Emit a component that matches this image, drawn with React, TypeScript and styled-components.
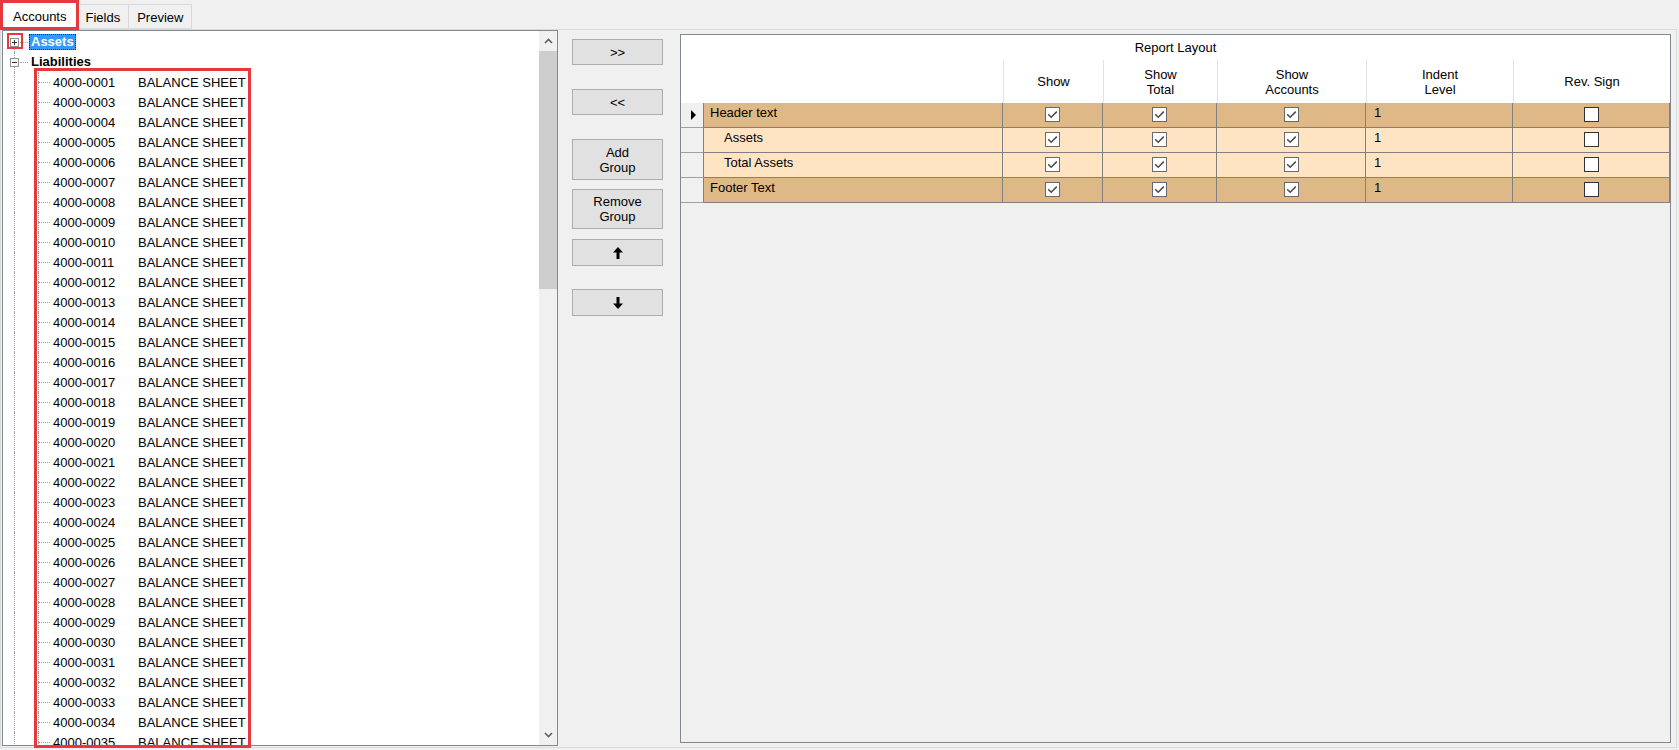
import React from 'react';
import styled, { createGlobalStyle } from 'styled-components';

const GlobalStyle = createGlobalStyle`
  html, body {
    margin: 0;
    padding: 0;
    background: #f0f0f0;
  }
  body {
    font-family: 'Liberation Sans', Arial, sans-serif;
    font-size: 13px;
    color: #000;
  }
`;

const COLS = '23px 299px 100px 114px 149px 147px 157px';
const DOT = '#a0a0a0';

const Window = styled.div`
  position: relative;
  width: 1679px;
  height: 750px;
  overflow: hidden;
  display: flex;
  flex-direction: column;
  background: #f0f0f0;
`;

/* ---------- tabs ---------- */

const TabStrip = styled.div`
  height: 29px;
  display: flex;
  align-items: flex-end;
  padding-left: 2px;
  position: relative;
  z-index: 1;
`;

const Tab = styled.div<{ $active?: boolean }>`
  box-sizing: border-box;
  flex-shrink: 0;
  height: ${p => (p.$active ? 28 : 25)}px;
  margin-bottom: ${p => (p.$active ? -1 : 0)}px;
  padding: 0 ${p => (p.$active ? 10 : 8)}px;
  border: 1px solid #d9d9d9;
  border-bottom: ${p => (p.$active ? 'none' : '1px solid #d9d9d9')};
  margin-left: ${p => (p.$active ? 0 : -1)}px;
  background: ${p => (p.$active ? '#ffffff' : '#f0f0f0')};
  display: flex;
  align-items: center;
  padding-top: ${p => (p.$active ? 0 : 1)}px;
`;

const TabPage = styled.div`
  box-sizing: border-box;
  height: 719px;
  margin-right: 2px;
  border: 1px solid #dadada;
  padding: 0 0 1px 1px;
  display: flex;
  align-items: stretch;
`;

/* ---------- tree ---------- */

const TreePanel = styled.div`
  box-sizing: border-box;
  width: 556px;
  border: 1px solid #828790;
  background: #fff;
  display: flex;
`;

const TreeList = styled.div`
  flex: 1;
  overflow: hidden;
  padding-top: 1px;
`;

const RootRow = styled.div<{ $first?: boolean }>`
  position: relative;
  height: 20px;
  display: flex;
  align-items: center;
  padding-left: 7px;

  &::before {
    content: '';
    position: absolute;
    left: 11px;
    top: ${p => (p.$first ? '50%' : '0')};
    bottom: 0;
    border-left: 1px dotted ${DOT};
  }
`;

const ExpandBox = styled.span`
  position: relative;
  z-index: 1;
  width: 9px;
  height: 9px;
  display: flex;
`;

const RootLink = styled.span`
  width: 8px;
  margin: 0 1px;
  border-top: 1px dotted ${DOT};
`;

const NodeLabel = styled.span<{ $selected?: boolean }>`
  font-weight: bold;
  height: 16px;
  line-height: 16px;
  padding: 0 2px;
  box-sizing: border-box;
  background: ${p => (p.$selected ? '#3399ff' : 'transparent')};
  color: ${p => (p.$selected ? '#fff' : '#000')};
  outline: ${p => (p.$selected ? '1px dotted #0d2a4d' : 'none')};
  outline-offset: -1px;
`;

const ItemRow = styled.div`
  position: relative;
  height: 20px;
  display: flex;
  align-items: center;
  padding-left: 35px;
  white-space: nowrap;

  &::before,
  &::after {
    content: '';
    position: absolute;
    top: 0;
    bottom: 0;
    border-left: 1px dotted ${DOT};
  }
  &::before {
    left: 11px;
  }
  &::after {
    left: 35px;
  }
`;

const ItemLink = styled.span`
  width: 12px;
  margin-right: 3px;
  border-top: 1px dotted ${DOT};
`;

const ItemCode = styled.span`
  width: 85px;
`;

const ScrollBar = styled.div`
  width: 18px;
  background: #f0f0f0;
  display: flex;
  flex-direction: column;
`;

const ScrollArrow = styled.div`
  height: 20px;
  display: flex;
  align-items: center;
  justify-content: center;
`;

const ScrollThumb = styled.div`
  height: 238px;
  background: #cdcdcd;
`;

const ScrollTrack = styled.div`
  flex: 1;
`;

/* ---------- buttons ---------- */

const ButtonColumn = styled.div`
  width: 122px;
  box-sizing: border-box;
  padding-left: 14px;
  display: flex;
  flex-direction: column;
`;

const ActionButton = styled.div<{ $h: number; $gap: number }>`
  box-sizing: border-box;
  width: 91px;
  height: ${p => p.$h}px;
  margin-top: ${p => p.$gap}px;
  background: #e1e1e1;
  border: 1px solid #adadad;
  display: flex;
  align-items: center;
  justify-content: center;
  text-align: center;
  line-height: 15px;
`;

/* ---------- grid ---------- */

const GridPanel = styled.div`
  box-sizing: border-box;
  width: 991px;
  margin: 4px 0 3px 0;
  border: 1px solid #828790;
  background: #f0f0f0;
  display: flex;
  flex-direction: column;
`;

const GridTitle = styled.div`
  height: 25px;
  line-height: 25px;
  text-align: center;
  background: #fff;
`;

const HeaderRow = styled.div`
  display: grid;
  grid-template-columns: ${COLS};
  height: 43px;
  background: #fff;
`;

const HeaderCell = styled.div<{ $sep?: boolean }>`
  border-left: ${p => (p.$sep ? '1px solid #e3e3e3' : 'none')};
  display: flex;
  align-items: center;
  justify-content: center;
  text-align: center;
  line-height: 15px;
`;

const DataRow = styled.div<{ $group?: boolean }>`
  display: grid;
  grid-template-columns: ${COLS};
  height: 25px;
  background: ${p => (p.$group ? '#deb887' : '#ffe4c4')};
`;

const RowHeader = styled.div`
  box-sizing: border-box;
  background: #f0f0f0;
  border-right: 1px solid #808080;
  border-bottom: 1px solid #a0a0a0;
  display: flex;
  align-items: center;
  justify-content: center;
`;

const CurrentMarker = styled.span`
  width: 0;
  height: 0;
  margin-left: 2px;
  border-left: 5px solid #000;
  border-top: 5px solid transparent;
  border-bottom: 5px solid transparent;
`;

const Cell = styled.div<{ $indent?: number; $center?: boolean }>`
  box-sizing: border-box;
  border-right: 1px solid #808080;
  border-bottom: 1px solid #808080;
  display: flex;
  align-items: ${p => (p.$center ? 'center' : 'flex-start')};
  justify-content: ${p => (p.$center ? 'center' : 'flex-start')};
  padding: ${p => (p.$center ? '0' : `2px 0 0 ${p.$indent ?? 6}px`)};
  line-height: 16px;
  white-space: nowrap;
`;

const CheckFrame = styled.span<{ $checked: boolean }>`
  box-sizing: border-box;
  width: 15px;
  height: 15px;
  margin-top: -1px;
  background: #fff;
  border: 1px solid ${p => (p.$checked ? '#6a6a6a' : '#333333')};
  display: flex;
  align-items: center;
  justify-content: center;
`;

/* ---------- annotation boxes ---------- */

const Callout = styled.div<{ $x: number; $y: number; $w: number; $h: number; $t: number }>`
  position: absolute;
  left: ${p => p.$x}px;
  top: ${p => p.$y}px;
  width: ${p => p.$w}px;
  height: ${p => p.$h}px;
  box-sizing: border-box;
  border: ${p => p.$t}px solid #e8383d;
  pointer-events: none;
  z-index: 5;
`;

/* ---------- drawings ---------- */

const ExpandIcon = ({ open }: { open?: boolean }) => (
  <svg width="9" height="9" viewBox="0 0 9 9">
    <rect x="0.5" y="0.5" width="8" height="8" fill="#fff" stroke="#919191" />
    <line x1="2" y1="4.5" x2="7" y2="4.5" stroke="#333" />
    {!open && <line x1="4.5" y1="2" x2="4.5" y2="7" stroke="#333" />}
  </svg>
);

const Chevron = ({ down }: { down?: boolean }) => (
  <svg width="9" height="6" viewBox="0 0 9 6">
    <polyline
      points={down ? '1,1 4.5,4.5 8,1' : '1,5 4.5,1.5 8,5'}
      fill="none"
      stroke="#606060"
      strokeWidth="1.6"
    />
  </svg>
);

const ArrowIcon = ({ down }: { down?: boolean }) => (
  <svg width="10" height="12" viewBox="0 0 10 12" style={down ? { transform: 'rotate(180deg)' } : undefined}>
    <path d="M5 0 L10 5.5 L6.5 5.5 L6.5 12 L3.5 12 L3.5 5.5 L0 5.5 Z" fill="#000" />
  </svg>
);

const CheckBox = ({ checked }: { checked: boolean }) => (
  <CheckFrame $checked={checked}>
    {checked && (
      <svg width="11" height="11" viewBox="0 0 11 11">
        <polyline points="1.2,5.3 4.2,8.3 9.8,2.6" fill="none" stroke="#4a4a4a" strokeWidth="1.5" />
      </svg>
    )}
  </CheckFrame>
);

/* ---------- data ---------- */

const accountCodes = [
  '4000-0001',
  ...Array.from({ length: 33 }, (_, i) => `4000-${String(i + 3).padStart(4, '0')}`),
];

const layoutRows = [
  { name: 'Header text', indent: 6, group: true, current: true, rev: false },
  { name: 'Assets', indent: 20, group: false, current: false, rev: false },
  { name: 'Total Assets', indent: 20, group: false, current: false, rev: false },
  { name: 'Footer Text', indent: 6, group: true, current: false, rev: false },
];

const buttons: { label: React.ReactNode; h: number; gap: number }[] = [
  { label: '>>', h: 26, gap: 9 },
  { label: '<<', h: 26, gap: 24 },
  { label: <>Add<br />Group</>, h: 41, gap: 24 },
  { label: <>Remove<br />Group</>, h: 40, gap: 9 },
  { label: <ArrowIcon />, h: 27, gap: 10 },
  { label: <ArrowIcon down />, h: 27, gap: 23 },
];

export default function App() {
  return (
    <>
      <GlobalStyle />
      <Window>
        <TabStrip>
          <Tab $active>Accounts</Tab>
          <Tab>Fields</Tab>
          <Tab>Preview</Tab>
        </TabStrip>

        <TabPage>
          <TreePanel>
            <TreeList>
              <RootRow $first>
                <ExpandBox>
                  <ExpandIcon />
                </ExpandBox>
                <RootLink />
                <NodeLabel $selected>Assets</NodeLabel>
              </RootRow>
              <RootRow>
                <ExpandBox>
                  <ExpandIcon open />
                </ExpandBox>
                <RootLink />
                <NodeLabel>Liabilities</NodeLabel>
              </RootRow>
              {accountCodes.map(code => (
                <ItemRow key={code}>
                  <ItemLink />
                  <ItemCode>{code}</ItemCode>
                  <span>BALANCE SHEET</span>
                </ItemRow>
              ))}
            </TreeList>
            <ScrollBar>
              <ScrollArrow>
                <Chevron />
              </ScrollArrow>
              <ScrollThumb />
              <ScrollTrack />
              <ScrollArrow>
                <Chevron down />
              </ScrollArrow>
            </ScrollBar>
          </TreePanel>

          <ButtonColumn>
            {buttons.map((b, i) => (
              <ActionButton key={i} $h={b.h} $gap={b.gap}>
                {b.label}
              </ActionButton>
            ))}
          </ButtonColumn>

          <GridPanel>
            <GridTitle>Report Layout</GridTitle>
            <HeaderRow>
              <HeaderCell />
              <HeaderCell />
              <HeaderCell $sep>Show</HeaderCell>
              <HeaderCell $sep>Show<br />Total</HeaderCell>
              <HeaderCell $sep>Show<br />Accounts</HeaderCell>
              <HeaderCell $sep>Indent<br />Level</HeaderCell>
              <HeaderCell $sep>Rev. Sign</HeaderCell>
            </HeaderRow>
            {layoutRows.map(row => (
              <DataRow key={row.name} $group={row.group}>
                <RowHeader>{row.current && <CurrentMarker />}</RowHeader>
                <Cell $indent={row.indent}>{row.name}</Cell>
                <Cell $center>
                  <CheckBox checked />
                </Cell>
                <Cell $center>
                  <CheckBox checked />
                </Cell>
                <Cell $center>
                  <CheckBox checked />
                </Cell>
                <Cell $indent={8}>1</Cell>
                <Cell $center>
                  <CheckBox checked={row.rev} />
                </Cell>
              </DataRow>
            ))}
          </GridPanel>
        </TabPage>

        <Callout $x={0} $y={0} $w={79} $h={30} $t={3} />
        <Callout $x={7} $y={33} $w={16} $h={16} $t={2} />
        <Callout $x={34} $y={68} $w={217} $h={680} $t={3} />
      </Window>
    </>
  );
}
